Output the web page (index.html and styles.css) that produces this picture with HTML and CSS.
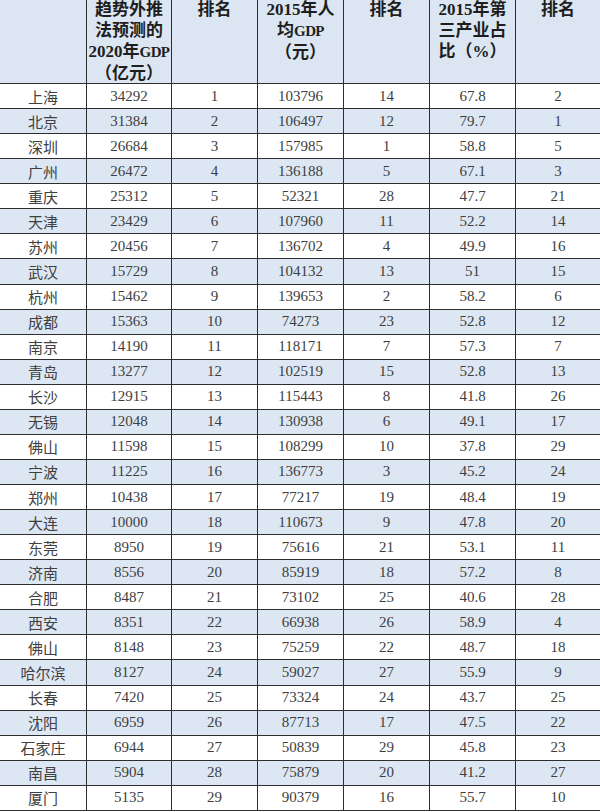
FILE: index.html
```html
<!DOCTYPE html>
<html lang="zh">
<head>
<meta charset="utf-8">
<title>城市GDP</title>
<link rel="stylesheet" href="styles.css">
</head>
<body>
<div class="table">
  <div class="row head">
    <div class="c"></div>
    <div class="c">趋势外推<br>法预测的<br>2020年<span class="sm">GDP</span><br>（亿元）</div>
    <div class="c">排名</div>
    <div class="c">2015年人<br>均<span class="sm">GDP</span><br>（元）</div>
    <div class="c">排名</div>
    <div class="c">2015年第<br>三产业占<br>比（%）</div>
    <div class="c">排名</div>
  </div>
  <div class="row"><div class="c city">上海</div><div class="c">34292</div><div class="c">1</div><div class="c">103796</div><div class="c">14</div><div class="c">67.8</div><div class="c">2</div></div>
  <div class="row alt"><div class="c city">北京</div><div class="c">31384</div><div class="c">2</div><div class="c">106497</div><div class="c">12</div><div class="c">79.7</div><div class="c">1</div></div>
  <div class="row"><div class="c city">深圳</div><div class="c">26684</div><div class="c">3</div><div class="c">157985</div><div class="c">1</div><div class="c">58.8</div><div class="c">5</div></div>
  <div class="row alt"><div class="c city">广州</div><div class="c">26472</div><div class="c">4</div><div class="c">136188</div><div class="c">5</div><div class="c">67.1</div><div class="c">3</div></div>
  <div class="row"><div class="c city">重庆</div><div class="c">25312</div><div class="c">5</div><div class="c">52321</div><div class="c">28</div><div class="c">47.7</div><div class="c">21</div></div>
  <div class="row alt"><div class="c city">天津</div><div class="c">23429</div><div class="c">6</div><div class="c">107960</div><div class="c">11</div><div class="c">52.2</div><div class="c">14</div></div>
  <div class="row"><div class="c city">苏州</div><div class="c">20456</div><div class="c">7</div><div class="c">136702</div><div class="c">4</div><div class="c">49.9</div><div class="c">16</div></div>
  <div class="row alt"><div class="c city">武汉</div><div class="c">15729</div><div class="c">8</div><div class="c">104132</div><div class="c">13</div><div class="c">51</div><div class="c">15</div></div>
  <div class="row"><div class="c city">杭州</div><div class="c">15462</div><div class="c">9</div><div class="c">139653</div><div class="c">2</div><div class="c">58.2</div><div class="c">6</div></div>
  <div class="row alt"><div class="c city">成都</div><div class="c">15363</div><div class="c">10</div><div class="c">74273</div><div class="c">23</div><div class="c">52.8</div><div class="c">12</div></div>
  <div class="row"><div class="c city">南京</div><div class="c">14190</div><div class="c">11</div><div class="c">118171</div><div class="c">7</div><div class="c">57.3</div><div class="c">7</div></div>
  <div class="row alt"><div class="c city">青岛</div><div class="c">13277</div><div class="c">12</div><div class="c">102519</div><div class="c">15</div><div class="c">52.8</div><div class="c">13</div></div>
  <div class="row"><div class="c city">长沙</div><div class="c">12915</div><div class="c">13</div><div class="c">115443</div><div class="c">8</div><div class="c">41.8</div><div class="c">26</div></div>
  <div class="row alt"><div class="c city">无锡</div><div class="c">12048</div><div class="c">14</div><div class="c">130938</div><div class="c">6</div><div class="c">49.1</div><div class="c">17</div></div>
  <div class="row"><div class="c city">佛山</div><div class="c">11598</div><div class="c">15</div><div class="c">108299</div><div class="c">10</div><div class="c">37.8</div><div class="c">29</div></div>
  <div class="row alt"><div class="c city">宁波</div><div class="c">11225</div><div class="c">16</div><div class="c">136773</div><div class="c">3</div><div class="c">45.2</div><div class="c">24</div></div>
  <div class="row"><div class="c city">郑州</div><div class="c">10438</div><div class="c">17</div><div class="c">77217</div><div class="c">19</div><div class="c">48.4</div><div class="c">19</div></div>
  <div class="row alt"><div class="c city">大连</div><div class="c">10000</div><div class="c">18</div><div class="c">110673</div><div class="c">9</div><div class="c">47.8</div><div class="c">20</div></div>
  <div class="row"><div class="c city">东莞</div><div class="c">8950</div><div class="c">19</div><div class="c">75616</div><div class="c">21</div><div class="c">53.1</div><div class="c">11</div></div>
  <div class="row alt"><div class="c city">济南</div><div class="c">8556</div><div class="c">20</div><div class="c">85919</div><div class="c">18</div><div class="c">57.2</div><div class="c">8</div></div>
  <div class="row"><div class="c city">合肥</div><div class="c">8487</div><div class="c">21</div><div class="c">73102</div><div class="c">25</div><div class="c">40.6</div><div class="c">28</div></div>
  <div class="row alt"><div class="c city">西安</div><div class="c">8351</div><div class="c">22</div><div class="c">66938</div><div class="c">26</div><div class="c">58.9</div><div class="c">4</div></div>
  <div class="row"><div class="c city">佛山</div><div class="c">8148</div><div class="c">23</div><div class="c">75259</div><div class="c">22</div><div class="c">48.7</div><div class="c">18</div></div>
  <div class="row alt"><div class="c city">哈尔滨</div><div class="c">8127</div><div class="c">24</div><div class="c">59027</div><div class="c">27</div><div class="c">55.9</div><div class="c">9</div></div>
  <div class="row"><div class="c city">长春</div><div class="c">7420</div><div class="c">25</div><div class="c">73324</div><div class="c">24</div><div class="c">43.7</div><div class="c">25</div></div>
  <div class="row alt"><div class="c city">沈阳</div><div class="c">6959</div><div class="c">26</div><div class="c">87713</div><div class="c">17</div><div class="c">47.5</div><div class="c">22</div></div>
  <div class="row"><div class="c city">石家庄</div><div class="c">6944</div><div class="c">27</div><div class="c">50839</div><div class="c">29</div><div class="c">45.8</div><div class="c">23</div></div>
  <div class="row alt"><div class="c city">南昌</div><div class="c">5904</div><div class="c">28</div><div class="c">75879</div><div class="c">20</div><div class="c">41.2</div><div class="c">27</div></div>
  <div class="row"><div class="c city">厦门</div><div class="c">5135</div><div class="c">29</div><div class="c">90379</div><div class="c">16</div><div class="c">55.7</div><div class="c">10</div></div>
</div>
</body>
</html>
```

FILE: styles.css
```css
html, body {
  margin: 0;
  padding: 0;
  background: #ffffff;
}
.table {
  width: 600px;
  display: flex;
  flex-direction: column;
}
.row {
  display: grid;
  grid-template-columns: 86px 85px 86px 86px 86px 86px 85px;
  height: 25.07px;
  box-sizing: border-box;
  border-bottom: 1px solid #2e2e2e;
  background: #ffffff;
}
.row.alt {
  background: #dde7f3;
}
.row.head {
  height: 84px;
  background: #dce6f2;
}
.c {
  box-sizing: border-box;
  border-left: 1px solid #2e2e2e;
  display: flex;
  align-items: center;
  justify-content: center;
  font-family: "Liberation Serif", "Noto Sans CJK SC", serif;
  font-size: 15px;
  color: #3e3e3e;
  white-space: nowrap;
}
.c:first-child {
  border-left: none;
}
.city {
  font-family: "Noto Sans CJK SC", sans-serif;
  color: #404040;
}
.head .c {
  display: block;
  text-align: center;
  font-weight: bold;
  font-size: 17px;
  line-height: 21px;
  color: #1e1e1e;
  padding-top: 0;
  margin-top: -1px;
}
.head .c:first-child {
  margin-top: 0;
}
.sm {
  font-size: 15px;
  letter-spacing: -0.6px;
}
```
